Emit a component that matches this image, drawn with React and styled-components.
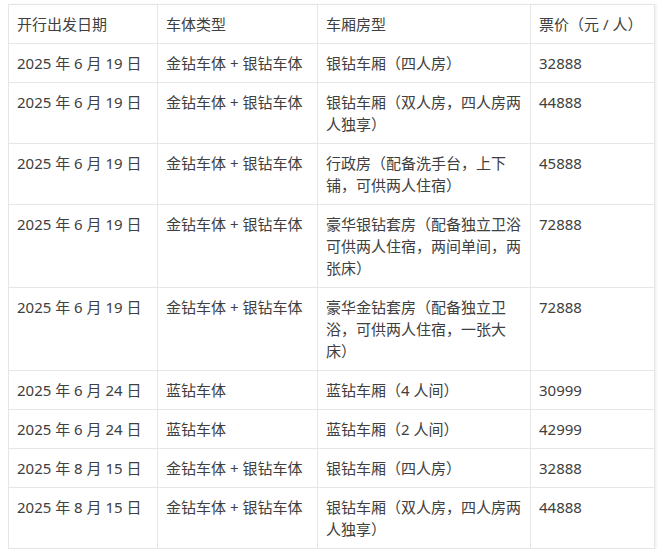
import React from 'react';
import styled, { createGlobalStyle } from 'styled-components';

const GlobalStyle = createGlobalStyle`
  html, body {
    margin: 0;
    padding: 0;
    background: #ffffff;
  }
`

const Page = styled.div`
  padding: 4px 0 0 8px;
  font-family: "Noto Sans", "Noto Sans CJK SC", sans-serif;
  color: #404040;
`

const Table = styled.table`
  width: 646px;
  table-layout: fixed;
  border-collapse: collapse;
  font-size: 15px;
  line-height: 22px;
  box-shadow: 2px 0 2px rgba(0, 0, 0, 0.05);
`

const Col = styled.col`
  width: ${p => p.$w}px;
`

const Cell = styled.td`
  border: 1px solid #e6e6e6;
  padding: 8px;
  vertical-align: top;
  text-align: left;
  font-weight: normal;
`

const HeadCell = styled(Cell).attrs({ as: 'th' })``

const widths = [149, 160, 213, 124]

const header = ['开行出发日期', '车体类型', '车厢房型', '票价（元 / 人）']

const rows = [
  ['2025 年 6 月 19 日', '金钻车体 + 银钻车体', '银钻车厢（四人房）', '32888'],
  ['2025 年 6 月 19 日', '金钻车体 + 银钻车体', '银钻车厢（双人房，四人房两人独享）', '44888'],
  ['2025 年 6 月 19 日', '金钻车体 + 银钻车体', '行政房（配备洗手台，上下铺，可供两人住宿）', '45888'],
  ['2025 年 6 月 19 日', '金钻车体 + 银钻车体', '豪华银钻套房（配备独立卫浴可供两人住宿，两间单间，两张床）', '72888'],
  ['2025 年 6 月 19 日', '金钻车体 + 银钻车体', '豪华金钻套房（配备独立卫浴，可供两人住宿，一张大床）', '72888'],
  ['2025 年 6 月 24 日', '蓝钻车体', '蓝钻车厢（4 人间）', '30999'],
  ['2025 年 6 月 24 日', '蓝钻车体', '蓝钻车厢（2 人间）', '42999'],
  ['2025 年 8 月 15 日', '金钻车体 + 银钻车体', '银钻车厢（四人房）', '32888'],
  ['2025 年 8 月 15 日', '金钻车体 + 银钻车体', '银钻车厢（双人房，四人房两人独享）', '44888'],
]

const App = () => {
  return (
    <Page>
      <GlobalStyle />
      <Table>
        <colgroup>
          {widths.map((w, i) => <Col key={i} $w={w} />)}
        </colgroup>
        <thead>
          <tr>
            {header.map((h, i) => <HeadCell key={i}>{h}</HeadCell>)}
          </tr>
        </thead>
        <tbody>
          {rows.map((r, i) => (
            <tr key={i}>
              {r.map((c, j) => <Cell key={j}>{c}</Cell>)}
            </tr>
          ))}
        </tbody>
      </Table>
    </Page>
  );
};

export default App;
